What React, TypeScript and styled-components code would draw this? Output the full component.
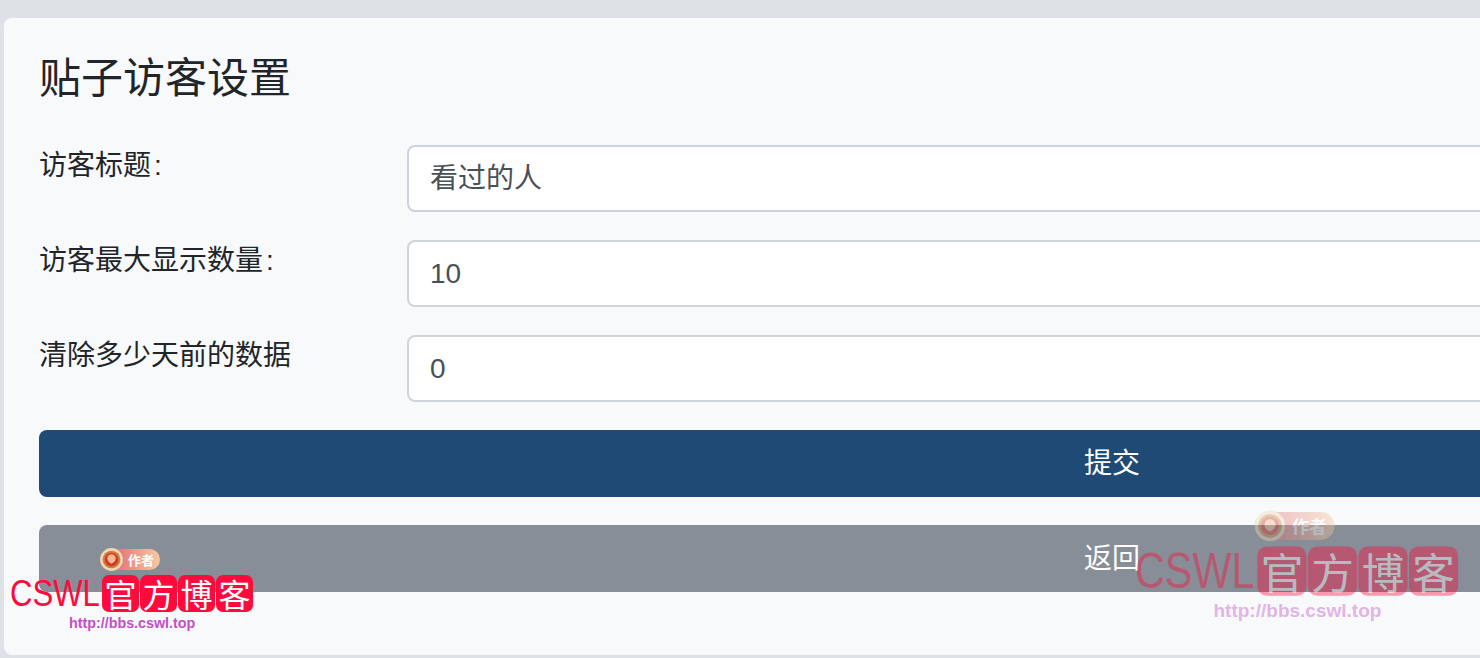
import React from 'react';
import styled, { createGlobalStyle } from 'styled-components';

const Global = createGlobalStyle`
  html, body { margin: 0; padding: 0; height: 658px; overflow: hidden; background: #dee2e6; }
  * { box-sizing: border-box; }
`;
const Page = styled.div`
  position: relative; width: 1480px; height: 658px; overflow: hidden;
  padding: 18px 0 0 4px;
  font-family: "Liberation Sans", "Noto Sans CJK SC", sans-serif; color: #212529;
`;
const Card = styled.main`
  width: 2216px; height: 637px; background: #f8f9fa; border-radius: 8px;
  padding: 32px 35px 0;
`;
const Title = styled.h1`
  margin: 0 0 45px; font-size: 42px; line-height: 50px; font-weight: 400;
  font-family: "Noto Sans CJK SC", sans-serif;
`;
const Row = styled.div`
  display: grid; grid-template-columns: 368px 1fr; margin-bottom: 28px;
`;
const Label = styled.label`
  font-size: 28px; line-height: 42px;
`;
const Colon = styled.span`
  margin-left: 3px;
`;
const Input = styled.div<{ $accent?: boolean; $cjk?: boolean }>`
  height: 67px; padding: 0 21px ${p => (p.$cjk ? '6px' : '0')}; display: flex; align-items: center;
  background: #fff; border: 2px solid ${p => (p.$accent ? '#cfd0e2' : '#ced4da')}; border-radius: 8px;
  font-size: 28px; color: #495057;
`;
const Button = styled.button<{ $bg: string }>`
  display: block; width: 100%; height: 67px; margin-bottom: 28px; padding: 0 0 5px; border: 0; border-radius: 8px;
  background: ${p => p.$bg}; color: #fff; font: inherit; font-size: 28px;
`;
const Mark = styled.div<{ $x: number; $y: number; $o: number; $s: number }>`
  position: absolute; left: ${p => p.$x}px; top: ${p => p.$y}px; opacity: ${p => p.$o};
  width: 300px; height: 100px; transform: scale(${p => p.$s}); transform-origin: 0 0; pointer-events: none;
`;
const Brand = styled.span`
  position: absolute; left: 0; top: 26px; color: #ff0a3c; font-size: 37px; line-height: 38px;
  font-family: "Liberation Sans", sans-serif; font-weight: 400; white-space: nowrap;
  transform: scaleX(0.84); transform-origin: 0 0;
`;
const Seals = styled.div`
  position: absolute; left: 92px; top: 26px; display: flex; gap: 1px;
`;
const Seal = styled.span`
  width: 37px; height: 37px; border-radius: 7px; background: #ff0a3c; color: #fff;
  display: flex; align-items: center; justify-content: center;
  font-size: 32px; line-height: 37px; font-family: "Noto Sans CJK SC", sans-serif;
`;
const Url = styled.span`
  position: absolute; left: 59px; top: 65px; color: #c24fc8; font-size: 14.3px; line-height: 18px;
  font-weight: 700; font-family: "Liberation Sans", sans-serif; white-space: nowrap;
`;
const Badge = styled.div`
  position: absolute; left: 90px; top: 0; width: 60px; height: 21px; border-radius: 11px;
  background: linear-gradient(90deg, #e0556c, #f5c9a0); display: flex; align-items: center;
`;
const BadgeText = styled.span`
  margin-left: 28px; color: #fff; font-size: 13px; line-height: 21px; font-weight: 700;
  font-family: "Noto Sans CJK SC", sans-serif;
`;
const Medal = styled.svg`
  position: absolute; left: -1px; top: -2px; width: 25px; height: 25px;
`;

const Watermark = ({ x, y, o, s }: { x: number; y: number; o: number; s: number }) => (
  <Mark $x={x} $y={y} $o={o} $s={s}>
    <Badge>
      <Medal viewBox="0 0 24 24">
        <circle cx="12" cy="12" r="11" fill="#f0d9b0" />
        <circle cx="12" cy="12" r="8.5" fill="#c9803f" />
        <circle cx="12" cy="12" r="6.5" fill="#d8342f" />
        <path d="M12 7 a4 4 0 0 1 4 4 c0 2.5-2 4-4 5 c-2-1-4-2.500-4-5 a4 4 0 0 1 4-4z" fill="#f7b98c" />
      </Medal>
      <BadgeText>作者</BadgeText>
    </Badge>
    <Brand>CSWL</Brand>
    <Seals>
      {['官', '方', '博', '客'].map(c => <Seal key={c}>{c}</Seal>)}
    </Seals>
    <Url>http://bbs.cswl.top</Url>
  </Mark>
);

export default function App() {
  return (
    <Page>
      <Global />
      <Card>
        <Title>贴子访客设置</Title>
        <Row><Label>访客标题<Colon>:</Colon></Label><Input $accent $cjk>看过的人</Input></Row>
        <Row><Label>访客最大显示数量<Colon>:</Colon></Label><Input>10</Input></Row>
        <Row><Label>清除多少天前的数据</Label><Input>0</Input></Row>
        <Button $bg="#1f4a75">提交</Button>
        <Button $bg="#878e97">返回</Button>
      </Card>
      <Watermark x={10} y={549} o={1} s={1} />
      <Watermark x={1135} y={512} o={0.4} s={1.33} />
    </Page>
  );
}
